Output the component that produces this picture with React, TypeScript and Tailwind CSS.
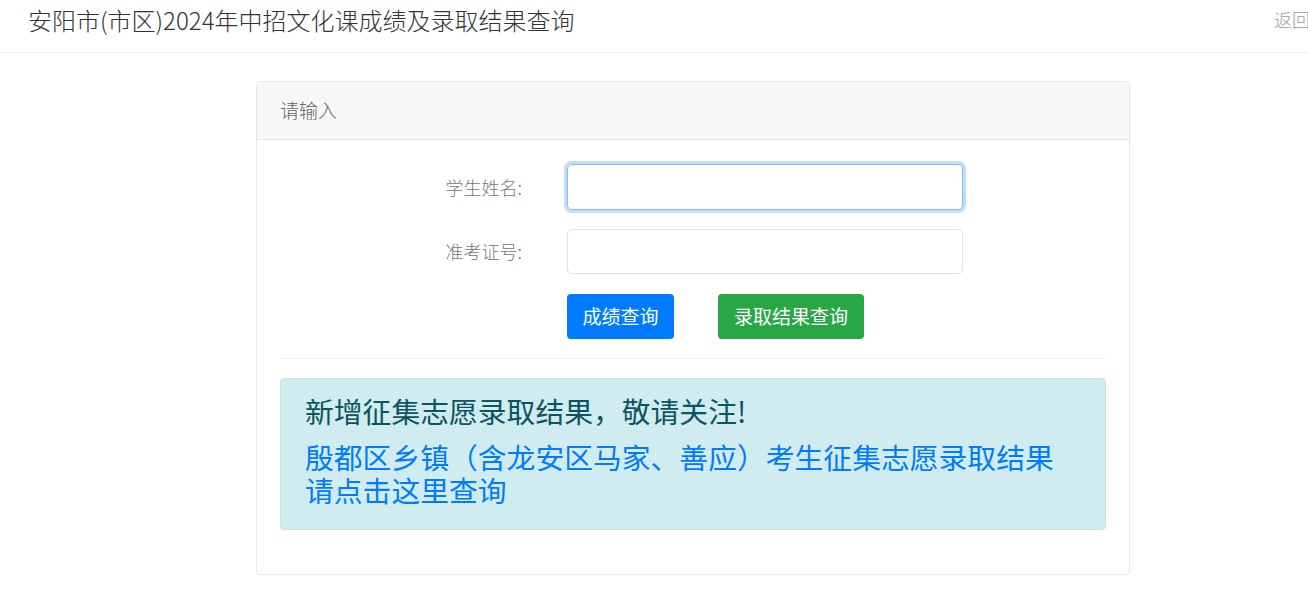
import React from "react";

const font = { fontFamily: '"Noto Sans CJK SC", "Noto Sans", sans-serif' };

export default function App() {
  return (
    <div className="min-h-[611px] bg-white font-['Noto_Sans_CJK_SC','Noto_Sans',sans-serif]" style={font}>
      <header className="h-[53px] border-b border-[#f2f2f2] flex justify-between items-start overflow-hidden">
        <h1 className="pl-[28px] pt-[2px] text-[24px] leading-[36px] font-light text-[#333]">
          安阳市(市区)2024年中招文化课成绩及录取结果查询
        </h1>
        <a className="pt-[4px] text-[18px] leading-[30px] font-light text-[#999] whitespace-nowrap mr-[-2px]">返回</a>
      </header>

      <div className="ml-[256px] mt-[28px] w-[874px] border border-[#e8e8e8] rounded-[4px] overflow-hidden">
        <div className="h-[58px] bg-[#f7f7f7] border-b border-[#e3e3e3] px-[23px] flex items-center text-[19px] text-[#666] font-light">
          请输入
        </div>
        <div className="px-[23px] pt-[24px] pb-[44px]">
          <div className="flex items-center">
            <label className="w-[242px] text-right text-[18px] text-[#777] font-light">学生姓名:</label>
            <input
              className="ml-[45px] w-[396px] h-[46px] rounded-[5px] border border-[#80bdff] shadow-[0_0_0_3px_rgba(0,123,255,0.25)] outline-none px-3"
              type="text"
            />
          </div>
          <div className="flex items-center mt-[19px]">
            <label className="w-[242px] text-right text-[18px] text-[#777] font-light">准考证号:</label>
            <input
              className="ml-[45px] w-[396px] h-[45px] rounded-[5px] border border-[#e0e0e0] outline-none px-3"
              type="text"
            />
          </div>
          <div className="flex items-center mt-[20px] ml-[287px] gap-[44px]">
            <button className="w-[107px] h-[45px] rounded-[4px] bg-[#007bff] text-white text-[19px]">成绩查询</button>
            <button className="w-[146px] h-[45px] rounded-[4px] bg-[#28a745] text-white text-[19px]">录取结果查询</button>
          </div>
          <div className="mt-[19px] border-t border-[#eeeeee]" />
          <div className="mt-[19px] bg-[#d1ecf1] border border-[#bee5eb] rounded-[4px] px-[24px] pt-[15px] pb-[23px]">
            <div className="text-[28.8px] leading-[34px] text-[#0c5460]">新增征集志愿录取结果，敬请关注!</div>
            <a className="block mt-[12px] text-[28.8px] leading-[33px] text-[#007bff]">
              <span className="block">殷都区乡镇（含龙安区马家、善应）考生征集志愿录取结果</span>
              <span className="block">请点击这里查询</span>
            </a>
          </div>
        </div>
      </div>
    </div>
  );
}
